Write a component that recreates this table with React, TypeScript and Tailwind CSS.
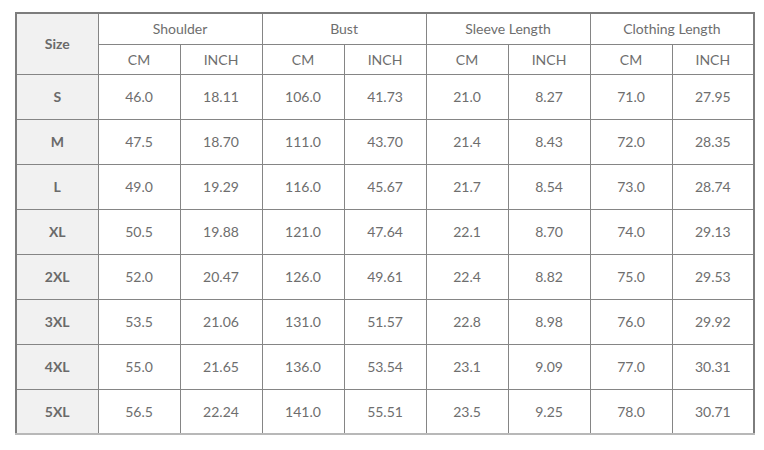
import React from "react";

const rows: [string, string, string, string, string, string, string, string, string][] = [
  ["S", "46.0", "18.11", "106.0", "41.73", "21.0", "8.27", "71.0", "27.95"],
  ["M", "47.5", "18.70", "111.0", "43.70", "21.4", "8.43", "72.0", "28.35"],
  ["L", "49.0", "19.29", "116.0", "45.67", "21.7", "8.54", "73.0", "28.74"],
  ["XL", "50.5", "19.88", "121.0", "47.64", "22.1", "8.70", "74.0", "29.13"],
  ["2XL", "52.0", "20.47", "126.0", "49.61", "22.4", "8.82", "75.0", "29.53"],
  ["3XL", "53.5", "21.06", "131.0", "51.57", "22.8", "8.98", "76.0", "29.92"],
  ["4XL", "55.0", "21.65", "136.0", "53.54", "23.1", "9.09", "77.0", "30.31"],
  ["5XL", "56.5", "22.24", "141.0", "55.51", "23.5", "9.25", "78.0", "30.71"],
];

const groups = ["Shoulder", "Bust", "Sleeve Length", "Clothing Length"];

export default function App() {
  return (
    <div
      className="w-[764px] h-[450px] bg-white pl-[15px] pt-[12px]"
      style={{ fontFamily: "Lato, 'Liberation Sans', sans-serif" }}
    >
      <table className="table-fixed border-collapse w-[739px] text-[14px] text-[#6e6e6e] border-t-2 border-l-2 border-r-2 border-b-2 border-t-[#7d7d7d] border-l-[#7d7d7d] border-r-[#7d7d7d] border-b-[#b8b8b8]">
        <colgroup>
          <col className="w-[82px]" />
          {Array.from({ length: 8 }).map((_, i) => (
            <col key={i} className="w-[82px]" />
          ))}
        </colgroup>
        <thead>
          <tr className="h-[31px]">
            <th
              rowSpan={2}
              className="border border-[#858585] bg-[#f1f1f1] font-bold text-[#6a6a6a] text-center align-middle"
            >
              Size
            </th>
            {groups.map((g) => (
              <th
                key={g}
                colSpan={2}
                className="border border-[#858585] font-normal text-center align-middle"
              >
                {g}
              </th>
            ))}
          </tr>
          <tr className="h-[30px]">
            {groups.map((g) => (
              <React.Fragment key={g}>
                <th className="border border-[#858585] font-normal text-center">CM</th>
                <th className="border border-[#858585] font-normal text-center">INCH</th>
              </React.Fragment>
            ))}
          </tr>
        </thead>
        <tbody>
          {rows.map((r) => (
            <tr key={r[0]} className="h-[45px]">
              <td className="border border-[#858585] bg-[#f1f1f1] font-bold text-[#6a6a6a] text-center">
                {r[0]}
              </td>
              {r.slice(1).map((v, i) => (
                <td key={i} className="border border-[#858585] text-center">
                  {v}
                </td>
              ))}
            </tr>
          ))}
        </tbody>
      </table>
    </div>
  );
}
